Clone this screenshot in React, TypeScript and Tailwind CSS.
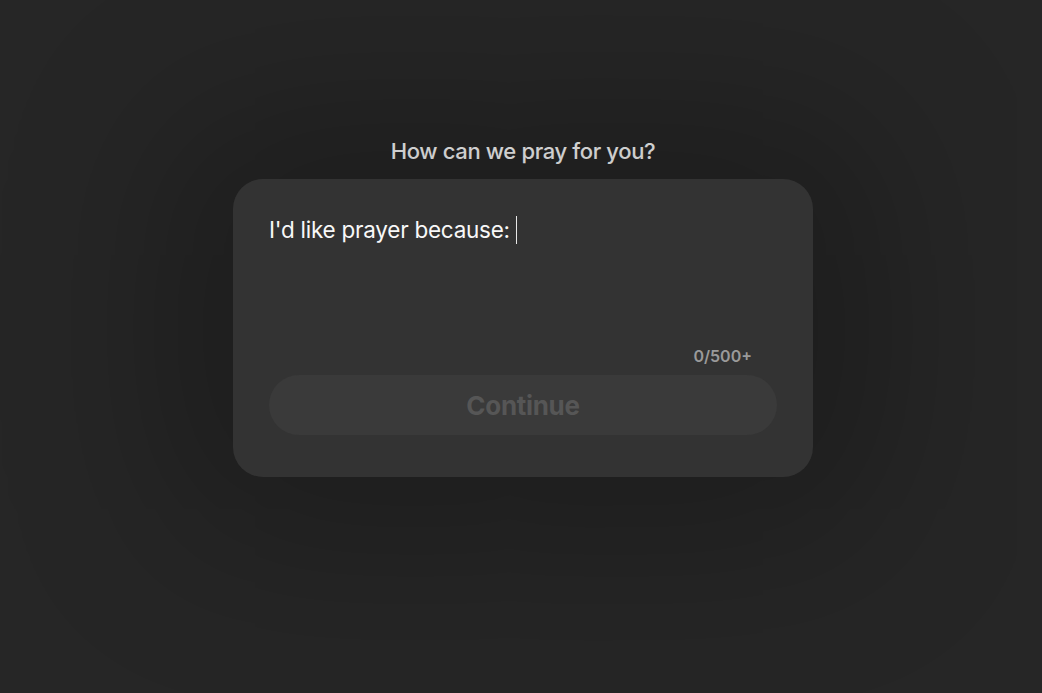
import React from 'react';

const App: React.FC = () => {
  return (
    <div
      className="min-h-screen w-full bg-[#262626] flex flex-col items-center pt-[136px] pl-[4px]"
      style={{ fontFamily: 'Inter, "Noto Sans", sans-serif' }}
    >
      <h1 className="text-[22px] leading-[30px] font-medium text-[#f6f6f6] tracking-[-0.35px]">
        How can we pray for you?
      </h1>

      <div className="mt-[13px] w-[580px] h-[298px] rounded-[30px] bg-[#333333] shadow-[0_0_170px_60px_rgba(0,0,0,0.26)] px-[36px] flex flex-col">
        <div className="pt-[35px] h-[160px] flex items-start">
          <span className="text-[22.5px] leading-[32px] text-[#f8f8f8] tracking-[-0.25px]">
            I'd like prayer because:
          </span>
          <span className="ml-[6px] mt-[2px] w-[1.5px] h-[28px] bg-[#e8e8e8]" />
        </div>

        <div className="flex justify-end pr-[25px] mt-[7px]">
          <span className="text-[16px] leading-[20px] font-semibold text-[#9a9a9a]">0/500+</span>
        </div>

        <button
          disabled
          className="mt-[9px] h-[60px] w-full rounded-full bg-[#3a3a3a] text-[26px] leading-[30px] font-bold text-[#565656] tracking-[-0.3px] pt-[2px]"
        >
          Continue
        </button>
      </div>
    </div>
  );
};

export default App;
